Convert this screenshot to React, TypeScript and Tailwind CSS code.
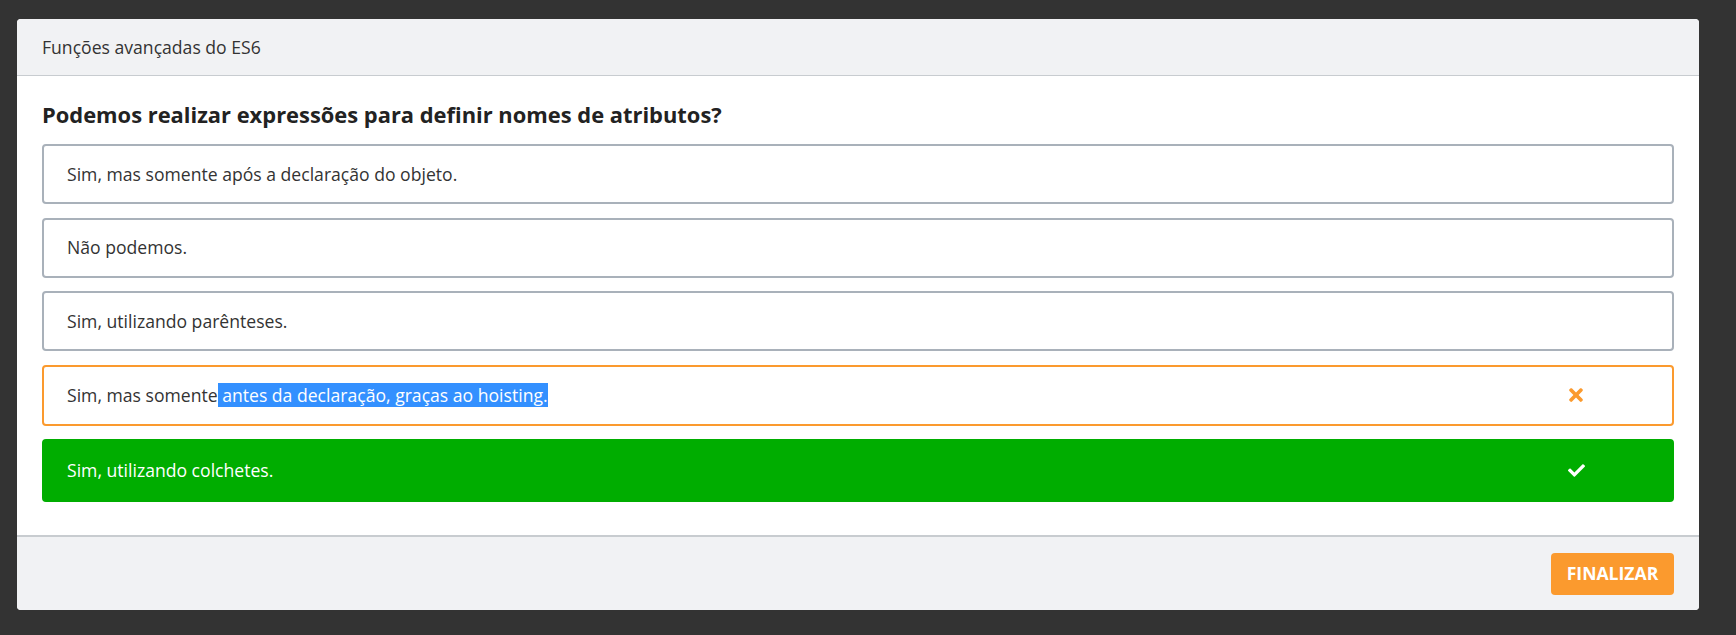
import { FaTimes, FaCheck } from 'react-icons/fa'

type Status = 'idle' | 'wrong' | 'right'

interface Option {
  id: number
  text: string
  selected?: string
  status: Status
}

const options: Option[] = [
  { id: 1, text: 'Sim, mas somente após a declaração do objeto.', status: 'idle' },
  { id: 2, text: 'Não podemos.', status: 'idle' },
  { id: 3, text: 'Sim, utilizando parênteses.', status: 'idle' },
  { id: 4, text: 'Sim, mas somente', selected: ' antes da declaração, graças ao hoisting.', status: 'wrong' },
  { id: 5, text: 'Sim, utilizando colchetes.', status: 'right' },
]

const boxStyles: Record<Status, string> = {
  idle: 'h-[60px] border-[#a9b1ba] bg-white text-[#333]',
  wrong: 'h-[61px] border-[#fb9a2e] bg-white text-[#333]',
  right: 'h-[63px] border-[#00ad00] bg-[#00ad00] text-white',
}

const App = () => {
  return (
    <div className="min-h-[635px] bg-[#333333] pt-[19px] pl-[17px] pr-[37px] pb-[25px] font-['Open_Sans',sans-serif]">
      <div className="bg-white rounded-[4px] overflow-hidden">
        {/* header */}
        <div className="h-[57px] bg-[#f1f2f4] border-b border-[#c8ccd0] flex items-center px-[25px]">
          <span className="text-[17.6px] text-[#333]">Funções avançadas do ES6</span>
        </div>

        <div className="px-[25px] pt-[24px] pb-[33px]">
          <h2 className="text-[21.9px] leading-[30px] font-bold text-[#222] mb-[14px]">
            Podemos realizar expressões para definir nomes de atributos?
          </h2>

          <div className="flex flex-col gap-[13.5px]">
            {options.map((opt) => (
              <div
                key={opt.id}
                className={`border-2 rounded-[4px] flex items-center pl-[23px] text-[17.6px] ${boxStyles[opt.status]}`}
              >
                <span className="flex-1">
                  {opt.text}
                  {opt.selected && <span className="bg-[#3390ff] text-white">{opt.selected}</span>}
                </span>
                <div className="w-[20px] mr-[86px] flex justify-center">
                  {opt.status === 'wrong' && <FaTimes className="text-[#fb9a2e]" size={20} />}
                  {opt.status === 'right' && <FaCheck className="text-white" size={17} />}
                </div>
              </div>
            ))}
          </div>
        </div>

        {/* footer */}
        <div className="h-[75px] bg-[#f1f2f4] border-t-2 border-[#c8ccd0] flex items-center justify-end px-[25px]">
          <button className="h-[42px] w-[123px] rounded-[4px] bg-[#fb9a2e] text-white font-bold text-[17.6px]">
            FINALIZAR
          </button>
        </div>
      </div>
    </div>
  )
}

export default App
